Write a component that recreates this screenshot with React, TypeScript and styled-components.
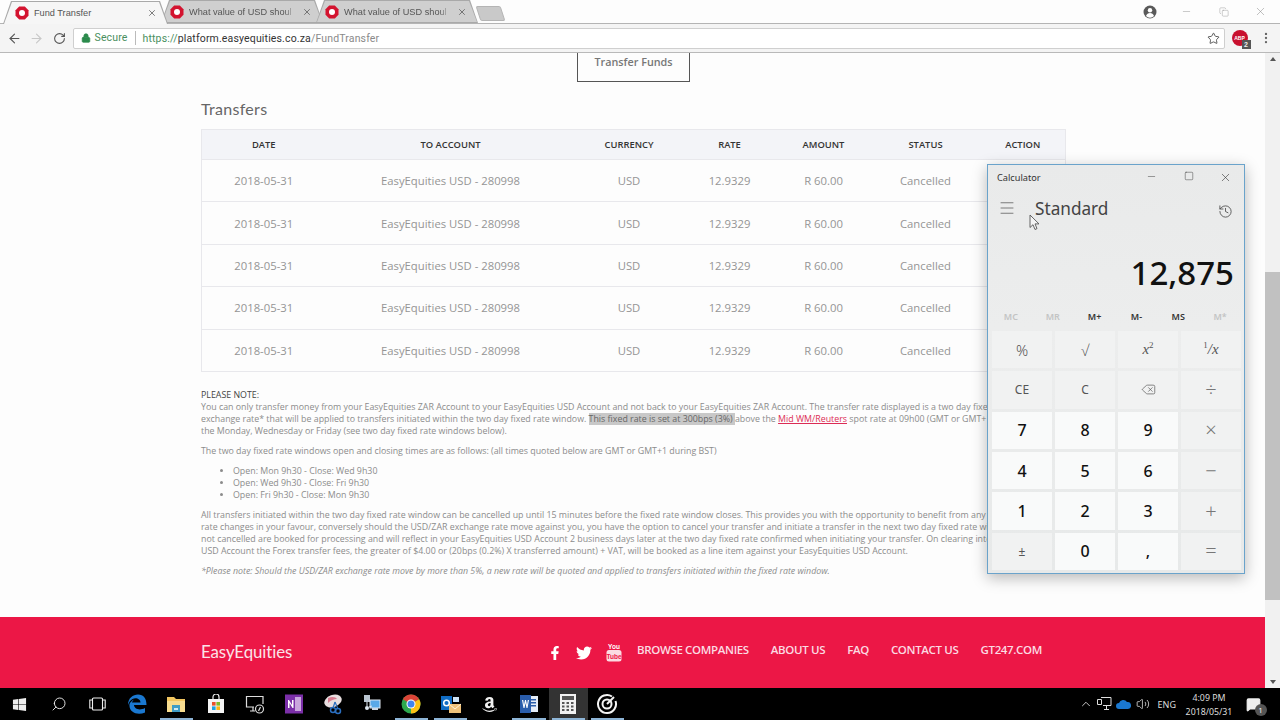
import React from 'react';
import styled, {createGlobalStyle} from 'styled-components';
import {FaFacebookF, FaTwitter, FaWindows, FaAmazon} from 'react-icons/fa';
import {
  ArrowLeft,
  ArrowRight,
  RotateCw,
  Lock,
  Star,
  EllipsisVertical,
  Minus,
  Square,
  X,
  Copy,
  Menu,
  History,
  Delete,
  Search,
  ChevronUp,
  Volume2,
  MessageSquare,
} from 'lucide-react';

const GlobalStyle = createGlobalStyle`
  html, body {
    margin: 0;
    padding: 0;
    height: 720px;
    overflow: hidden;
    background: #000;
  }
  body {
    font-family: 'Open Sans', 'Liberation Sans', sans-serif;
  }
`;

const Screen = styled.div`
  position: relative;
  width: 1280px;
  height: 720px;
  display: flex;
  flex-direction: column;
  overflow: hidden;
  background: #fdfdfd;
`;

/* browser chrome */
const TabStrip = styled.div`
  height: 24px;
  flex: none;
  display: flex;
  align-items: flex-end;
  padding-left: 3px;
  background: #fdfdfd;
  border-bottom: 1px solid #b4b4b4;
  box-sizing: border-box;
`;

const Tab = styled.div<{$active?: boolean}>`
  position: relative;
  width: ${p => (p.$active ? 165 : 162)}px;
  height: 23px;
  margin-right: -7px;
  margin-bottom: ${p => (p.$active ? -1 : 0)}px;
  z-index: ${p => (p.$active ? 2 : 1)};
  display: flex;
  align-items: center;
  padding: 1px 11px 0 ${p => (p.$active ? 12 : 9)}px;
  box-sizing: border-box;
  gap: 5px;
  background: #a9a9a9;
  clip-path: polygon(0 100%, 8px 0, calc(100% - 8px) 0, 100% 100%);
  &::before {
    content: '';
    position: absolute;
    inset: 1px 1px ${p => (p.$active ? 0 : 1)}px 1px;
    background: ${p => (p.$active ? '#f6f6f6' : '#cfcfcf')};
    clip-path: polygon(0 100%, 8px 0, calc(100% - 8px) 0, 100% 100%);
  }
  > * {
    position: relative;
  }
`;

const TabTitle = styled.span<{$fade?: boolean}>`
  flex: 1;
  font-size: 9.2px;
  line-height: 12px;
  color: #555;
  white-space: nowrap;
  font-family: 'Liberation Sans', sans-serif;
  ${p => (p.$fade ? '-webkit-mask-image: linear-gradient(90deg, #000 88%, transparent 99%);' : '')}
`;

const NewTab = styled.div`
  width: 25px;
  height: 15px;
  margin: 0 0 2px 7px;
  background: #c9c9c9;
  border: 1px solid #b4b4b4;
  box-sizing: border-box;
  transform: skewX(18deg);
  border-radius: 2px;
`;

const WindowControls = styled.div`
  margin-left: auto;
  margin-right: 1px;
  align-self: center;
  display: flex;
  align-items: center;
  color: #8d8d8d;
`;

const ChromeControl = styled.span`
  width: 37px;
  display: flex;
  justify-content: center;
`;

const Toolbar = styled.div`
  height: 29px;
  flex: none;
  display: flex;
  align-items: center;
  box-sizing: border-box;
  background: #f4f4f4;
  border-bottom: 1px solid #b9b9b9;
  padding-left: 3px;
  position: relative;
  z-index: 3;
`;

const NavButton = styled.span<{$off?: boolean}>`
  width: 22.5px;
  display: flex;
  justify-content: center;
  color: ${p => (p.$off ? '#c8c8c8' : '#555')};
`;

const AddressBar = styled.div`
  margin-left: 2px;
  width: 1152px;
  height: 21px;
  background: #fff;
  border: 1px solid #cfcfcf;
  border-radius: 2px;
  box-sizing: border-box;
  display: flex;
  align-items: center;
  padding: 0 4px 0 7px;
  font-size: 10.5px;
  font-family: 'Roboto', 'Liberation Sans', sans-serif;
  letter-spacing: 0.15px;
`;

const Secure = styled.span`
  color: #4a8f60;
  margin-left: 4px;
  padding-right: 7px;
  margin-right: 7px;
  border-right: 1px solid #bbb;
  line-height: 14px;
`;

const UrlPart = styled.span<{$tone: 'green' | 'dark' | 'grey'}>`
  color: ${p => ({green: '#4a8f60', dark: '#333', grey: '#8a8a8a'}[p.$tone])};
`;

const StarSlot = styled.span`
  margin-left: auto;
  display: flex;
  color: #444;
`;

const Extension = styled.span`
  position: relative;
  margin-left: 7px;
  width: 16px;
  height: 16px;
  border-radius: 50%;
  background: #c8102e;
  color: #fff;
  font-size: 5px;
  font-weight: 700;
  display: flex;
  align-items: center;
  justify-content: center;
  font-family: 'Liberation Sans', sans-serif;
`;

const ExtBadge = styled.span`
  position: absolute;
  right: -3px;
  bottom: -3px;
  width: 9px;
  height: 9px;
  background: #555;
  color: #eee;
  font-size: 7px;
  line-height: 9px;
  text-align: center;
`;

const KebabSlot = styled.span`
  margin-left: 11px;
  display: flex;
  color: #666;
`;

/* page */
const PageArea = styled.div`
  flex: 1;
  display: flex;
  min-height: 0;
`;

const Page = styled.main`
  flex: 1;
  display: flex;
  flex-direction: column;
  min-width: 0;
`;

const Content = styled.div`
  width: 864px;
  margin-left: 201px;
`;

const TransferButton = styled.div`
  width: 113px;
  height: 29px;
  margin-left: 376px;
  box-sizing: border-box;
  border: 1px solid #555;
  border-top: none;
  text-align: center;
  font-size: 10.8px;
  font-weight: 600;
  line-height: 18px;
  color: #777;
`;

const Title = styled.h2`
  margin: 16px 0 10px;
  font-family: 'Lato', 'Liberation Sans', sans-serif;
  font-weight: 400;
  font-size: 16px;
  line-height: 21px;
  color: #666;
  letter-spacing: 0.3px;
`;

const Table = styled.table`
  width: 864px;
  table-layout: fixed;
  border-collapse: collapse;
  border: 1px solid #e8e8ec;
`;

const HeadRow = styled.tr`
  height: 30px;
  background: #f3f4f8;
`;

const Head = styled.th`
  font-size: 9.4px;
  font-weight: 600;
  color: #333;
  padding: 0;
  text-transform: uppercase;
`;

const Row = styled.tr`
  height: 42.4px;
  border-top: 1px solid #e8e8ec;
`;

const Cell = styled.td`
  padding: 0;
  text-align: center;
  font-size: 11.3px;
  color: #959595;
  white-space: nowrap;
`;

const Notes = styled.div`
  margin-top: 17px;
  font-size: 8.83px;
  line-height: 12px;
  color: #8c8c8c;
  white-space: nowrap;
`;

const NoteHead = styled.div`
  color: #444;
`;

const NotePara = styled.p`
  margin: 0 0 8px;
`;

const Highlight = styled.span`
  background: #c8c8c8;
  color: #666;
`;

const NoteLink = styled.span`
  color: #dc2c55;
  text-decoration: underline;
`;

const NoteList = styled.ul`
  margin: 8px 0 8px;
  padding-left: 32px;
`;

const Disclaimer = styled.p`
  margin: 0;
  font-style: italic;
`;

const Footer = styled.footer`
  margin-top: auto;
  height: 71px;
  flex: none;
  background: #ec1746;
  color: #fff;
`;

const FooterInner = styled.div`
  width: 864px;
  margin-left: 201px;
  display: flex;
  align-items: flex-start;
  padding-top: 23px;
  box-sizing: border-box;
`;

const Brand = styled.div`
  font-family: 'Lato', 'Liberation Sans', sans-serif;
  font-size: 16.9px;
  line-height: 24px;
  letter-spacing: -0.1px;
  color: #fbe3e8;
`;

const FooterNav = styled.nav`
  margin-left: auto;
  margin-right: 23px;
  margin-top: -3px;
  display: flex;
  align-items: center;
  gap: 22px;
`;

const Socials = styled.div`
  display: flex;
  align-items: center;
  gap: 14px;
  margin-right: -7px;
  padding-top: 6px;
`;

const FooterLink = styled.a`
  font-size: 11.5px;
  line-height: 20px;
  font-weight: 600;
  letter-spacing: -0.35px;
  color: #fbdbe2;
  white-space: nowrap;
`;

const Scrollbar = styled.div`
  width: 15px;
  flex: none;
  background: #f1f1f1;
  display: flex;
  flex-direction: column;
  align-items: center;
  padding-top: 4px;
  box-sizing: border-box;
`;

const ScrollArrow = styled.div<{$down?: boolean}>`
  width: 0;
  height: 0;
  flex: none;
  border-left: 3.5px solid transparent;
  border-right: 3.5px solid transparent;
  ${p => (p.$down ? 'border-top: 4px solid #555;' : 'border-bottom: 4px solid #555;')}
`;

const ScrollThumb = styled.div`
  width: 15px;
  height: 328px;
  margin-top: 211px;
  margin-bottom: auto;
  background: #c1c1c1;
`;

const ScrollEnd = styled.div`
  padding-bottom: 4px;
`;

/* calculator window */
const CalcWindow = styled.section`
  position: absolute;
  left: 987px;
  top: 164px;
  width: 258px;
  height: 410px;
  box-sizing: border-box;
  border: 1.5px solid #6aa3cb;
  background: linear-gradient(180deg, #e9eaea, #eceded 40%, #e7e9e9);
  box-shadow: 0 4px 14px rgba(0, 0, 0, 0.28);
  z-index: 5;
  display: flex;
  flex-direction: column;
`;

const CalcTitleBar = styled.div`
  height: 24px;
  flex: none;
  display: flex;
  align-items: center;
  padding-left: 9px;
  font-family: 'Noto Sans', 'Open Sans', sans-serif;
  font-size: 9.2px;
  color: #333;
`;

const CalcControls = styled.div`
  margin-left: auto;
  display: flex;
  color: #333;
`;

const CalcControl = styled.span`
  width: 37px;
  display: flex;
  justify-content: center;
`;

const ModeRow = styled.div`
  height: 38px;
  flex: none;
  display: flex;
  align-items: center;
  padding: 0 11px 0 10px;
  color: #444;
`;

const ModeName = styled.div`
  margin-left: 19px;
  font-family: 'Noto Sans', 'Open Sans', sans-serif;
  font-size: 17.2px;
  color: #444;
`;

const HistorySlot = styled.span`
  margin-left: auto;
  display: flex;
  padding-top: 6px;
`;

const Display = styled.div`
  height: 78px;
  flex: none;
  box-sizing: border-box;
  padding: 12px 10px 0 0;
  display: flex;
  align-items: center;
  justify-content: flex-end;
  font-family: 'Noto Sans', 'Open Sans', sans-serif;
  font-size: 33px;
  font-weight: 500;
  color: #111;
`;

const MemoryRow = styled.div`
  height: 22px;
  flex: none;
  margin-bottom: 4px;
  padding: 0 3px 0 2px;
  display: grid;
  grid-template-columns: repeat(6, 1fr);
  align-items: center;
  text-align: center;
`;

const MemoryKey = styled.span<{$off?: boolean}>`
  font-size: 9px;
  font-weight: 600;
  font-family: 'Noto Sans', 'Open Sans', sans-serif;
  color: ${p => (p.$off ? '#c3c4c4' : '#333')};
`;

const Keypad = styled.div`
  flex: 1;
  display: grid;
  grid-template-columns: repeat(4, 1fr);
  grid-template-rows: repeat(6, 1fr);
  gap: 3px;
  padding: 0 3px 3px 4px;
`;

const Key = styled.button<{$kind: 'num' | 'op'}>`
  border: none;
  padding: 0;
  display: flex;
  align-items: center;
  justify-content: center;
  font-family: 'Noto Sans', 'Open Sans', sans-serif;
  background: ${p => (p.$kind === 'num' ? '#f9fafa' : '#f1f2f2')};
  color: ${p => (p.$kind === 'num' ? '#111' : '#555')};
  font-size: ${p => (p.$kind === 'num' ? 16 : 12)}px;
  font-weight: ${p => (p.$kind === 'num' ? 500 : 400)};
`;

const SymbolGlyph = styled.span`
  font-size: 15px;
  font-weight: 300;
`;

const MathGlyph = styled.span`
  font-family: 'Liberation Serif', serif;
  font-style: italic;
  font-size: 15px;
  sup {
    font-size: 9px;
    line-height: 0;
    font-style: normal;
  }
`;

const OpGlyph = styled.span`
  font-size: 20px;
  font-weight: 300;
  color: #777;
  line-height: 1;
`;

const PointerIcon = styled.svg`
  position: absolute;
  left: 1029px;
  top: 214px;
  z-index: 6;
`;

/* taskbar */
const Taskbar = styled.div`
  height: 32px;
  flex: none;
  background: #000;
  display: flex;
  align-items: stretch;
  position: relative;
  z-index: 6;
`;

const TaskButton = styled.div<{$running?: boolean; $active?: boolean}>`
  position: relative;
  width: 39.2px;
  display: flex;
  align-items: center;
  justify-content: center;
  color: #eee;
  background: ${p => (p.$active ? '#333' : 'transparent')};
  &::after {
    content: '';
    display: ${p => (p.$running ? 'block' : 'none')};
    position: absolute;
    left: 3px;
    right: 3px;
    bottom: 0;
    height: 2px;
    background: #8db4d6;
  }
`;

const Tray = styled.div`
  margin-left: auto;
  display: flex;
  align-items: center;
  color: #ddd;
  padding-right: 19.5px;
`;

const TraySlot = styled.span`
  width: 19px;
  display: flex;
  justify-content: center;
`;

const TrayLang = styled.span`
  font-size: 9px;
  margin: 0 5px 0 5.5px;
  font-family: 'Noto Sans', sans-serif;
`;

const Clock = styled.div`
  width: 56px;
  padding-top: 1px;
  text-align: center;
  font-size: 8.8px;
  line-height: 14px;
  font-family: 'Noto Sans', sans-serif;
  margin-right: 8.5px;
`;

const NotifySlot = styled.span`
  position: relative;
  display: flex;
  color: #eee;
`;

const NotifyCount = styled.span`
  position: absolute;
  right: -6px;
  bottom: -4px;
  width: 12px;
  height: 12px;
  border-radius: 50%;
  background: #555;
  font-size: 8px;
  line-height: 12px;
  text-align: center;
  color: #fff;
`;

const Favicon = () => (
  <svg width="14" height="14" viewBox="0 0 14 14">
    <polygon
      points="4.200,.5 9.800,.5 13.500,4.200 13.500,9.800 9.800,13.500 4.200,13.500 .5,9.800 .5,4.200"
      fill="#d3132f"
    />
    <circle cx="7" cy="7" r="3" fill="#fff" />
  </svg>
);

const UserIcon = () => (
  <svg width="14" height="14" viewBox="0 0 14 14">
    <circle cx="7" cy="7" r="6.500" fill="#5a5a5a" />
    <circle cx="7" cy="5.200" r="2.200" fill="#fff" />
    <path d="M3 11c.6-2 2.200-3 4-3s3.400 1 4 3a5.500 5.500 0 0 1-8 0z" fill="#fff" />
  </svg>
);

const YouTubeMark = () => (
  <svg width="16" height="19" viewBox="0 0 16 19">
    <text x="8" y="6" textAnchor="middle" fontSize="6.500" fontFamily="Liberation Sans" fontWeight="700" fill="#fff">
      You
    </text>
    <rect x="0.500" y="7" width="15" height="11.500" rx="2.500" fill="#fbdbe2" />
    <text x="8" y="15.500" textAnchor="middle" fontSize="6.500" fontFamily="Liberation Sans" fontWeight="700" fill="#ec1746">
      Tube
    </text>
  </svg>
);

const TaskViewIcon = () => (
  <svg width="17" height="14" viewBox="0 0 17 14" fill="none" stroke="#eee" strokeWidth="1.100">
    <rect x="3.500" y="1" width="10" height="12" rx="1" />
    <path d="M3 3H.8v8H3M14 3h2.200v8H14" />
  </svg>
);

const EdgeIcon = () => (
  <svg width="22" height="22" viewBox="0 0 22 22">
    <path
      d="M2 12C2 5 7 1.500 12 1.500c5.500 0 8.500 4 8.500 10.500H8c.3 4 5.500 6 11 3v4.500c-7 3-16.500.5-15.500-8.500C4.500 9 6 7.500 8 6.500 6.500 8 6 9 6 9.500h8.500C14.500 6 10 4 6.500 6 4.500 7 3 9 2 12z"
      fill="#1a78d0"
    />
  </svg>
);

const FilesIcon = () => (
  <svg width="20" height="18" viewBox="0 0 20 18">
    <path d="M1 2h7l2 2h9v13H1z" fill="#f2c661" />
    <rect x="1" y="6" width="18" height="11" fill="#f7dc8f" />
    <rect x="6" y="10" width="8" height="7" fill="#3f9cc6" />
    <rect x="8" y="13" width="4" height="2" fill="#cfeaf5" />
  </svg>
);

const StoreIcon = () => (
  <svg width="18" height="20" viewBox="0 0 18 20">
    <path d="M6 5V3a3 3 0 0 1 6 0v2" fill="none" stroke="#eee" strokeWidth="1.200" />
    <rect x="1" y="5" width="16" height="14" fill="#f4f4f4" />
    <rect x="5" y="8" width="3.600" height="3.600" fill="#e8512a" />
    <rect x="9.400" y="8" width="3.600" height="3.600" fill="#7fba28" />
    <rect x="5" y="12.400" width="3.600" height="3.600" fill="#1aa1e2" />
    <rect x="9.400" y="12.400" width="3.600" height="3.600" fill="#fcb813" />
  </svg>
);

const RemoteIcon = () => (
  <svg width="20" height="20" viewBox="0 0 20 20" fill="none" stroke="#ddd" strokeWidth="1.200">
    <path d="M18 10V2.500H1.500V13H9M5 17h5M8 13v4" />
    <circle cx="14.500" cy="15" r="4" />
    <path d="M13.500 17l2-4" />
  </svg>
);

const OneNoteIcon = () => (
  <svg width="20" height="20" viewBox="0 0 20 20">
    <rect x="1" y="0.500" width="18" height="19" fill="#7b2fa8" />
    <rect x="11" y="3" width="6" height="14" fill="#c9a6dd" />
    <path d="M4 14V6l1 0 3 5V6h1.500v8h-1L5.500 9v5z" fill="#fff" />
  </svg>
);

const SnipIcon = () => (
  <svg width="22" height="22" viewBox="0 0 22 22">
    <ellipse cx="11" cy="8" rx="9" ry="6" fill="#e9dfe0" transform="rotate(-20 11 8)" />
    <path d="M6 5c4-2 8-1 9 1-3 0-6 1-9 4z" fill="#d97c90" />
    <circle cx="11" cy="17" r="2.500" fill="none" stroke="#2b6fc0" strokeWidth="1.500" />
    <circle cx="16" cy="18" r="2.500" fill="none" stroke="#2b6fc0" strokeWidth="1.500" />
    <path d="M11 15l2-6M16 16l-3-7" stroke="#2b6fc0" strokeWidth="1.200" />
  </svg>
);

const NetIcon = () => (
  <svg width="22" height="22" viewBox="0 0 22 22">
    <rect x="3" y="2" width="6" height="7" fill="#b9c4d0" />
    <rect x="9" y="7" width="10" height="8" fill="#5aa9e8" stroke="#dfe8f2" />
    <rect x="11" y="15" width="6" height="2" fill="#cfd8e2" />
    <circle cx="6" cy="15" r="2" fill="#dfe8f2" />
    <path d="M6 9v4M8 14l3-1" stroke="#dfe8f2" />
  </svg>
);

const ChromeIcon = () => (
  <svg width="20" height="20" viewBox="0 0 20 20">
    <circle cx="10" cy="10" r="9.500" fill="#2da94f" />
    <path d="M10 .5a9.500 9.500 0 0 1 8.200 4.750L10 10 1.800 5.250A9.500 9.500 0 0 1 10 .5z" fill="#db4437" />
    <path d="M18.200 5.250A9.500 9.500 0 0 1 10 19.500L10 10z" fill="#fbc116" />
    <circle cx="10" cy="10" r="4.500" fill="#fff" />
    <circle cx="10" cy="10" r="3.500" fill="#3f84f0" />
  </svg>
);

const OutlookIcon = () => (
  <svg width="22" height="22" viewBox="0 0 22 22">
    <rect x="1" y="3" width="11" height="14" fill="#0f6cc4" />
    <circle cx="6.500" cy="10" r="2.800" fill="none" stroke="#fff" strokeWidth="1.500" />
    <path d="M13 4h6v5h-6z" fill="#cfe4f6" />
    <rect x="9" y="11" width="12" height="9" fill="#f0c27a" />
    <path d="M9 11l6 5 6-5" fill="none" stroke="#fff2d8" />
  </svg>
);

const WordIcon = () => (
  <svg width="20" height="20" viewBox="0 0 20 20">
    <rect x="8" y="2" width="11" height="16" fill="#e4ecf7" />
    <rect x="10" y="5" width="7" height="1.500" fill="#2a5dab" />
    <rect x="10" y="8" width="7" height="1.500" fill="#2a5dab" />
    <rect x="10" y="11" width="7" height="1.500" fill="#2a5dab" />
    <rect x="1" y="1" width="11" height="18" fill="#2a5dab" />
    <path d="M3 6l1.500 8h1L6.500 9l1 5h1L10 6H8.800l-.8 5-1-5H6l-1 5-.8-5z" fill="#fff" />
  </svg>
);

const CalcIcon = () => (
  <svg width="18" height="22" viewBox="0 0 18 22">
    <rect x="1" y="1" width="16" height="20" fill="#f1f1f1" />
    <rect x="3" y="3" width="12" height="4" fill="#555" />
    {[9, 12.500, 16].map(y =>
      [3, 7.500, 12].map(x => (
        <rect key={`${x}-${y}`} x={x} y={y} width="2.500" height="2" fill="#555" />
      )),
    )}
  </svg>
);

const TargetIcon = () => (
  <svg width="22" height="22" viewBox="0 0 22 22" fill="none" stroke="#f4f4f4">
    <path d="M16 3.500A9 9 0 1 0 19.500 8" strokeWidth="2" />
    <circle cx="11" cy="11" r="4.500" strokeWidth="2" />
    <path d="M11 11L18 4" strokeWidth="2" />
  </svg>
);

const CloudIcon = () => (
  <svg width="15" height="10" viewBox="0 0 15 10">
    <path d="M3 10a3 3 0 0 1 0-6 4.500 4.500 0 0 1 8-1 3.500 3.500 0 0 1 1 7z" fill="#1a78d0" />
  </svg>
);

const NetTrayIcon = () => (
  <svg width="15" height="14" viewBox="0 0 15 14" fill="none" stroke="#ddd">
    <path d="M4 .5h10v8H6M7 12.500h5M9.500 9v3.500" />
    <path d="M.5 2.500h4v5h-4z" />
  </svg>
);

const Cursor = () => (
  <PointerIcon width="12" height="17" viewBox="0 0 12 17">
    <path
      d="M1 1v12.500l3-2.800 2 4.800 2-.9-2-4.700h4z"
      fill="#f4f4f4"
      stroke="#555"
      strokeWidth="0.900"
    />
  </PointerIcon>
);

const columns = [62, 125, 53.5, 47, 47, 55, 42.5].map(v => v * 2);
const headings = ['Date', 'To Account', 'Currency', 'Rate', 'Amount', 'Status', 'Action'];
const tabs = ['Fund Transfer', 'What value of USD shoul', 'What value of USD shoul'];
const footerLinks = ['Browse Companies', 'About Us', 'FAQ', 'Contact Us', 'GT247.com'];
const memoryKeys = [
  {label: 'MC', off: true},
  {label: 'MR', off: true},
  {label: 'M+'},
  {label: 'M-'},
  {label: 'MS'},
  {label: 'M*', off: true},
];
const taskIcons: {icon: React.ReactNode; running?: boolean; active?: boolean}[] = [
  {icon: <FaWindows size={15} />},
  {icon: <Search size={16} strokeWidth={1.4} style={{transform: 'scaleX(-1)'}} />},
  {icon: <TaskViewIcon />},
  {icon: <EdgeIcon />},
  {icon: <FilesIcon />, running: true},
  {icon: <StoreIcon />},
  {icon: <RemoteIcon />},
  {icon: <OneNoteIcon />},
  {icon: <SnipIcon />},
  {icon: <NetIcon />},
  {icon: <ChromeIcon />, running: true},
  {icon: <OutlookIcon />, running: true},
  {icon: <FaAmazon size={17} color="#f0f0f0" />},
  {icon: <WordIcon />, running: true},
  {icon: <CalcIcon />, running: true, active: true},
  {icon: <TargetIcon />, running: true},
];

export default function App() {
  return (
    <Screen>
      <GlobalStyle />
      <TabStrip>
        {tabs.map((title, i) => (
          <Tab key={i} $active={i === 0}>
            <Favicon />
            <TabTitle $fade={i > 0}>{title}</TabTitle>
            <X size={10} color="#555" strokeWidth={1.8} />
          </Tab>
        ))}
        <NewTab />
        <WindowControls>
          <ChromeControl>
            <UserIcon />
          </ChromeControl>
          <ChromeControl>
            <Minus size={11} strokeWidth={1} />
          </ChromeControl>
          <ChromeControl>
            <Copy size={10} strokeWidth={1} />
          </ChromeControl>
          <ChromeControl>
            <X size={13} strokeWidth={1} />
          </ChromeControl>
        </WindowControls>
      </TabStrip>
      <Toolbar>
        <NavButton>
          <ArrowLeft size={15} strokeWidth={1.8} />
        </NavButton>
        <NavButton $off>
          <ArrowRight size={15} strokeWidth={1.8} />
        </NavButton>
        <NavButton>
          <RotateCw size={13} strokeWidth={2} />
        </NavButton>
        <AddressBar>
          <Lock size={10} color="#2b8a4c" fill="#2b8a4c" />
          <Secure>Secure</Secure>
          <UrlPart $tone="green">https://</UrlPart>
          <UrlPart $tone="dark">platform.easyequities.co.za</UrlPart>
          <UrlPart $tone="grey">/FundTransfer</UrlPart>
          <StarSlot>
            <Star size={13} strokeWidth={1.6} />
          </StarSlot>
        </AddressBar>
        <Extension>
          ABP
          <ExtBadge>2</ExtBadge>
        </Extension>
        <KebabSlot>
          <EllipsisVertical size={14} strokeWidth={2} />
        </KebabSlot>
      </Toolbar>

      <PageArea>
        <Page>
          <Content>
            <TransferButton>Transfer Funds</TransferButton>
            <Title>Transfers</Title>
            <Table>
              <colgroup>
                {columns.map((w, i) => (
                  <col key={i} style={{width: w}} />
                ))}
              </colgroup>
              <thead>
                <HeadRow>
                  {headings.map(h => (
                    <Head key={h}>{h}</Head>
                  ))}
                </HeadRow>
              </thead>
              <tbody>
                {[0, 1, 2, 3, 4].map(i => (
                  <Row key={i}>
                    <Cell>2018-05-31</Cell>
                    <Cell>EasyEquities USD - 280998</Cell>
                    <Cell>USD</Cell>
                    <Cell>12.9329</Cell>
                    <Cell>R 60.00</Cell>
                    <Cell>Cancelled</Cell>
                    <Cell />
                  </Row>
                ))}
              </tbody>
            </Table>
            <Notes>
              <NoteHead>PLEASE NOTE:</NoteHead>
              <NotePara>
                You can only transfer money from your EasyEquities ZAR Account to your EasyEquities USD
                Account and not back to your EasyEquities ZAR Account. The transfer rate displayed is a two
                day fixed
                <br />
                exchange rate* that will be applied to transfers initiated within the two day fixed rate
                window. <Highlight>This fixed rate is set at 300bps (3%) </Highlight>above the{' '}
                <NoteLink>Mid WM/Reuters</NoteLink> spot rate at 09h00 (GMT or GMT+1
                <br />
                the Monday, Wednesday or Friday (see two day fixed rate windows below).
              </NotePara>
              <NotePara>
                The two day fixed rate windows open and closing times are as follows: (all times quoted
                below are GMT or GMT+1 during BST)
              </NotePara>
              <NoteList>
                <li>Open: Mon 9h30 - Close: Wed 9h30</li>
                <li>Open: Wed 9h30 - Close: Fri 9h30</li>
                <li>Open: Fri 9h30 - Close: Mon 9h30</li>
              </NoteList>
              <NotePara>
                All transfers initiated within the two day fixed rate window can be cancelled up until 15
                minutes before the fixed rate window closes. This provides you with the opportunity to benefit
                from any
                <br />
                rate changes in your favour, conversely should the USD/ZAR exchange rate move against you, you
                have the option to cancel your transfer and initiate a transfer in the next two day fixed rate
                wi
                <br />
                not cancelled are booked for processing and will reflect in your EasyEquities USD Account 2
                business days later at the two day fixed rate confirmed when initiating your transfer. On
                clearing into
                <br />
                USD Account the Forex transfer fees, the greater of $4.00 or (20bps (0.2%) X transferred amount)
                + VAT, will be booked as a line item against your EasyEquities USD Account.
              </NotePara>
              <Disclaimer>
                *Please note: Should the USD/ZAR exchange rate move by more than 5%, a new rate will be quoted
                and applied to transfers initiated within the fixed rate window.
              </Disclaimer>
            </Notes>
          </Content>
          <Footer>
            <FooterInner>
              <Brand>EasyEquities</Brand>
              <FooterNav>
                <Socials>
                  <FaFacebookF size={14} color="#fff" />
                  <FaTwitter size={16} color="#fff" />
                  <YouTubeMark />
                </Socials>
                {footerLinks.map(l => (
                  <FooterLink key={l}>{l.toUpperCase()}</FooterLink>
                ))}
              </FooterNav>
            </FooterInner>
          </Footer>
        </Page>
        <Scrollbar>
          <ScrollArrow />
          <ScrollThumb />
          <ScrollEnd>
            <ScrollArrow $down />
          </ScrollEnd>
        </Scrollbar>
      </PageArea>

      <Taskbar>
        {taskIcons.map((t, i) => (
          <TaskButton key={i} $running={t.running} $active={t.active}>
            {t.icon}
          </TaskButton>
        ))}
        <Tray>
          <TraySlot>
            <ChevronUp size={14} strokeWidth={1.5} />
          </TraySlot>
          <TraySlot>
            <NetTrayIcon />
          </TraySlot>
          <TraySlot>
            <CloudIcon />
          </TraySlot>
          <TraySlot>
            <Volume2 size={14} strokeWidth={1.4} />
          </TraySlot>
          <TrayLang>ENG</TrayLang>
          <Clock>
            4:09 PM
            <br />
            2018/05/31
          </Clock>
          <NotifySlot>
            <MessageSquare size={15} fill="#eee" />
            <NotifyCount>1</NotifyCount>
          </NotifySlot>
        </Tray>
      </Taskbar>

      <CalcWindow>
        <CalcTitleBar>
          Calculator
          <CalcControls>
            <CalcControl>
              <Minus size={11} strokeWidth={1} />
            </CalcControl>
            <CalcControl>
              <Square size={10} strokeWidth={1.1} />
            </CalcControl>
            <CalcControl>
              <X size={13} strokeWidth={1.1} />
            </CalcControl>
          </CalcControls>
        </CalcTitleBar>
        <ModeRow>
          <Menu size={18} strokeWidth={0.9} />
          <ModeName>Standard</ModeName>
          <HistorySlot>
            <History size={15} strokeWidth={1.3} />
          </HistorySlot>
        </ModeRow>
        <Display>12,875</Display>
        <MemoryRow>
          {memoryKeys.map(m => (
            <MemoryKey key={m.label} $off={m.off}>
              {m.label}
            </MemoryKey>
          ))}
        </MemoryRow>
        <Keypad>
          <Key $kind="op">
            <SymbolGlyph>%</SymbolGlyph>
          </Key>
          <Key $kind="op">
            <SymbolGlyph>√</SymbolGlyph>
          </Key>
          <Key $kind="op">
            <MathGlyph>
              x<sup>2</sup>
            </MathGlyph>
          </Key>
          <Key $kind="op">
            <MathGlyph>
              <sup>1</sup>/x
            </MathGlyph>
          </Key>
          <Key $kind="op">CE</Key>
          <Key $kind="op">C</Key>
          <Key $kind="op">
            <Delete size={15} strokeWidth={1.1} />
          </Key>
          <Key $kind="op">
            <OpGlyph>÷</OpGlyph>
          </Key>
          <Key $kind="num">7</Key>
          <Key $kind="num">8</Key>
          <Key $kind="num">9</Key>
          <Key $kind="op">
            <OpGlyph>×</OpGlyph>
          </Key>
          <Key $kind="num">4</Key>
          <Key $kind="num">5</Key>
          <Key $kind="num">6</Key>
          <Key $kind="op">
            <OpGlyph>−</OpGlyph>
          </Key>
          <Key $kind="num">1</Key>
          <Key $kind="num">2</Key>
          <Key $kind="num">3</Key>
          <Key $kind="op">
            <OpGlyph>+</OpGlyph>
          </Key>
          <Key $kind="op">±</Key>
          <Key $kind="num">0</Key>
          <Key $kind="num">,</Key>
          <Key $kind="op">
            <OpGlyph>=</OpGlyph>
          </Key>
        </Keypad>
      </CalcWindow>
      <Cursor />
    </Screen>
  );
}
